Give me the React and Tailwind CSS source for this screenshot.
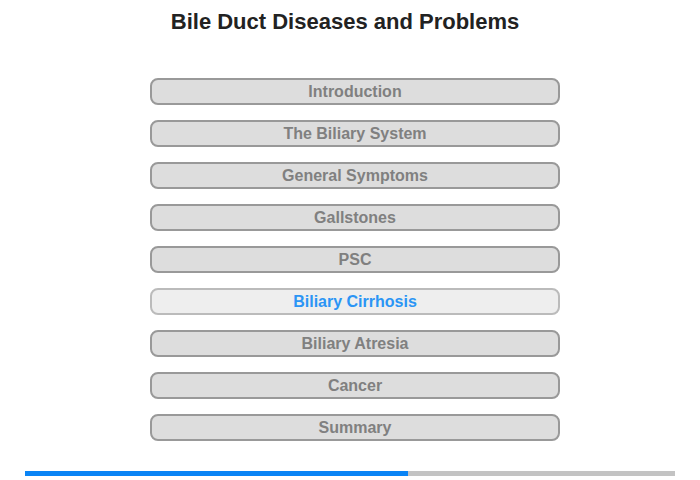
const items = [
  "Introduction",
  "The Biliary System",
  "General Symptoms",
  "Gallstones",
  "PSC",
  "Biliary Cirrhosis",
  "Biliary Atresia",
  "Cancer",
  "Summary",
];

const active = "Biliary Cirrhosis";

export default function App() {
  return (
    <div className="w-[700px] h-[480px] bg-white font-['Liberation_Sans',Arial,sans-serif]">
      {/* title */}
      <div className="w-[690px] pt-[9px] text-center text-[22px] leading-[26px] font-bold text-[#222]">
        Bile Duct Diseases and Problems
      </div>

      {/* menu */}
      <div className="ml-[150px] mt-[43px] w-[410px] flex flex-col gap-[15px]">
        {items.map((label) => (
          <button
            key={label}
            className={
              label === active
                ? "h-[27px] rounded-[8px] border-2 border-[#bbbbbb] bg-[#eeeeee] text-[#2b95f5] text-[16px] leading-[23px] font-bold text-center"
                : "h-[27px] rounded-[8px] border-2 border-[#999999] bg-[#dddddd] text-[#808080] text-[16px] leading-[23px] font-bold text-center"
            }
          >
            {label}
          </button>
        ))}
      </div>

      {/* progress */}
      <div className="ml-[25px] mt-[30px] w-[650px] h-[5px] bg-[#c3c3c3] flex">
        <div className="w-[383px] h-full bg-[#0a84f5]" />
      </div>
    </div>
  );
}
